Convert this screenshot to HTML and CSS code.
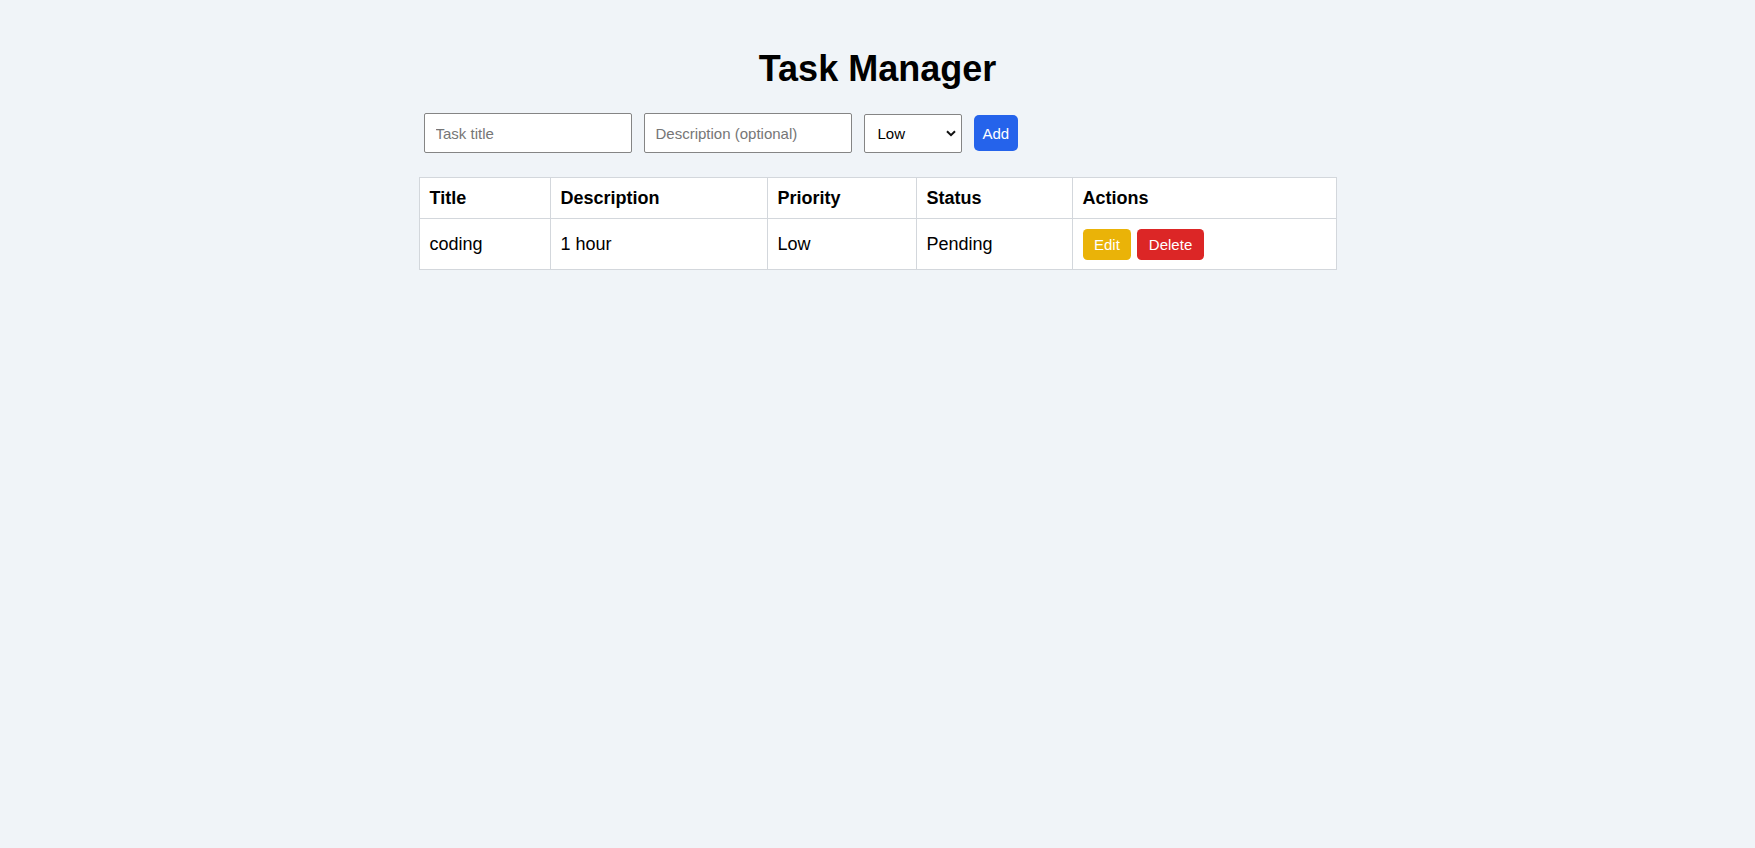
FILE: index.html
```html
<!DOCTYPE html>
<html lang="en">
<head>
<meta charset="utf-8">
<title>Task Manager</title>
<link rel="stylesheet" href="styles.css">
</head>
<body>
<div class="container">
  <h1 class="title">Task Manager</h1>
  <form class="task-form">
    <input class="field field-text" type="text" placeholder="Task title">
    <input class="field field-text" type="text" placeholder="Description (optional)">
    <span class="select-wrap">
      <select class="field field-select">
        <option>Low</option>
        <option>Medium</option>
        <option>High</option>
      </select>
      <svg class="chevron" width="10" height="7" viewBox="0 0 10 7" aria-hidden="true"><path d="M1 1.2 L5 5.2 L9 1.2" fill="none" stroke="#111" stroke-width="2"/></svg>
    </span>
    <button class="btn btn-add" type="button">Add</button>
  </form>
  <table class="task-table">
    <colgroup>
      <col class="col-title">
      <col class="col-desc">
      <col class="col-priority">
      <col class="col-status">
      <col class="col-actions">
    </colgroup>
    <thead>
      <tr>
        <th>Title</th>
        <th>Description</th>
        <th>Priority</th>
        <th>Status</th>
        <th>Actions</th>
      </tr>
    </thead>
    <tbody>
      <tr>
        <td>coding</td>
        <td>1 hour</td>
        <td>Low</td>
        <td>Pending</td>
        <td>
          <div class="actions">
            <button class="btn btn-edit" type="button">Edit</button>
            <button class="btn btn-delete" type="button">Delete</button>
          </div>
        </td>
      </tr>
    </tbody>
  </table>
</div>
</body>
</html>
```

FILE: styles.css
```css
* {
  box-sizing: border-box;
}

html, body {
  margin: 0;
  padding: 0;
}

body {
  background: #f0f4f8;
  font-family: "Liberation Sans", Arial, sans-serif;
  font-size: 18px;
  color: #000;
}

.container {
  width: 918px;
  margin: 0 auto;
  padding-top: 48px;
}

.title {
  margin: 0 0 24px;
  font-size: 36px;
  line-height: 41px;
  font-weight: 700;
  text-align: center;
}

.task-form {
  display: flex;
  align-items: center;
  gap: 12px;
  padding-left: 5px;
  margin: 0 0 24px;
}

.field {
  font-family: "Liberation Sans", Arial, sans-serif;
  font-size: 15px;
  color: #000;
  background: #fff;
  border: 1px solid #858585;
  border-radius: 2px;
  margin: 0;
}

.field-text {
  width: 208px;
  height: 40px;
  padding: 0 11px;
}

.field-text::placeholder {
  color: #767676;
}

.select-wrap {
  position: relative;
  display: block;
}

.field-select {
  display: block;
  width: 98px;
  height: 39px;
  padding: 0 13px;
  appearance: none;
  -webkit-appearance: none;
}

.chevron {
  position: absolute;
  right: 6px;
  top: 16px;
  pointer-events: none;
}

.btn {
  font-family: "Liberation Sans", Arial, sans-serif;
  font-size: 15px;
  color: #fff;
  border: none;
  border-radius: 4.5px;
  margin: 0;
  cursor: pointer;
}

.btn-add {
  height: 36px;
  padding: 0 9px;
  background: #2563eb;
  border-radius: 5px;
}

.task-table {
  width: 918px;
  border-collapse: collapse;
  table-layout: fixed;
  background: #fff;
}

.col-title { width: 131px; }
.col-desc { width: 217px; }
.col-priority { width: 149px; }
.col-status { width: 156px; }

.task-table th,
.task-table td {
  border: 1px solid #d3d7dc;
  padding: 9.7px 10px;
  text-align: left;
  font-size: 18px;
  line-height: 20.7px;
}

.task-table th {
  font-weight: 700;
}

.actions {
  display: flex;
  gap: 6px;
}

.btn-edit,
.btn-delete {
  height: 31px;
  padding: 0 11.5px;
}

.btn-edit {
  background: #eab308;
}

.btn-delete {
  background: #dc2626;
}
```
